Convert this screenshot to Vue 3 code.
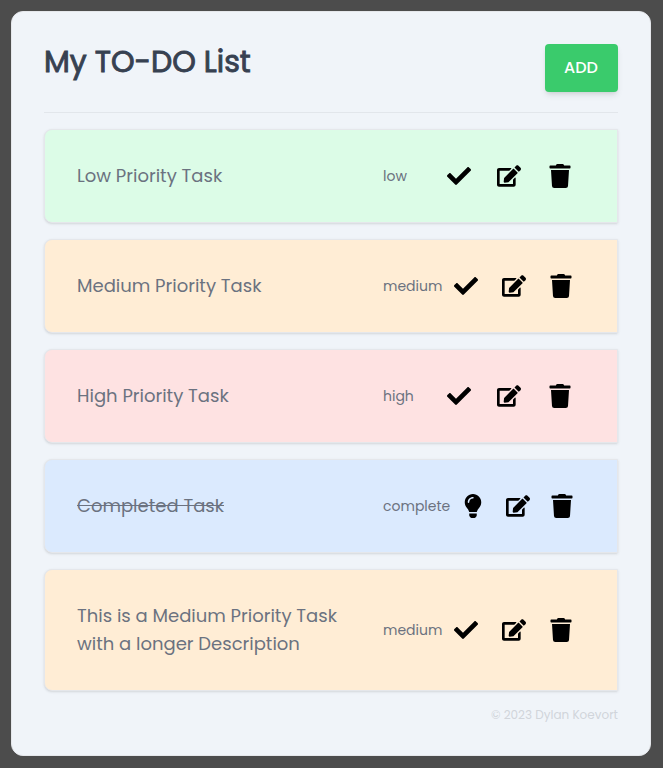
<script setup>
const CHECK = {
  box: '0 0 512 512',
  d: 'M173.898 439.404l-166.4-166.4c-9.997-9.997-9.997-26.206 0-36.204l36.203-36.204c9.997-9.998 26.207-9.998 36.204 0L192 312.69 432.095 72.596c9.997-9.997 26.207-9.997 36.204 0l36.203 36.204c9.997 9.997 9.997 26.206 0 36.204l-294.4 294.401c-9.998 9.997-26.207 9.997-36.204-.001z',
}
const BULB = {
  box: '0 0 352 512',
  d: 'M96.06 454.35c.01 6.29 1.87 12.45 5.36 17.69l17.09 25.69a31.99 31.99 0 0 0 26.64 14.28h61.71a31.99 31.99 0 0 0 26.64-14.28l17.09-25.69a31.989 31.989 0 0 0 5.36-17.69l.04-38.35H96.01l.05 38.35zM0 176c0 44.37 16.45 84.85 43.56 115.78 16.52 18.85 42.36 58.23 52.21 91.45.04.26.07.52.11.78h160.24c.04-.26.07-.51.11-.78 9.85-33.22 35.69-72.6 52.21-91.45C335.55 260.85 352 220.37 352 176 352 78.61 272.91-.3 175.45 0 73.44.31 0 82.97 0 176zm176-80c-44.11 0-80 35.89-80 80 0 8.84-7.16 16-16 16s-16-7.16-16-16c0-61.76 50.24-112 112-112 8.84 0 16 7.16 16 16s-7.16 16-16 16z',
}
const EDIT = {
  box: '0 0 576 512',
  d: 'M402.6 83.2l90.2 90.2c3.8 3.8 3.8 10 0 13.8L274.4 405.6l-92.8 10.3c-12.4 1.4-22.9-9.1-21.5-21.5l10.3-92.8L388.8 83.2c3.8-3.8 10-3.8 13.8 0zm162-22.9l-48.8-48.8c-15.2-15.2-39.9-15.2-55.2 0l-35.4 35.4c-3.8 3.8-3.8 10 0 13.8l90.2 90.2c3.8 3.8 10 3.8 13.8 0l35.4-35.4c15.2-15.3 15.2-40 0-55.2zM384 346.2V448H64V128h229.8c3.2 0 6.2-1.3 8.5-3.5l40-40c7.6-7.6 2-20.5-8.5-20.5H48C21.5 64 0 85.5 0 112v352c0 26.5 21.5 48 48 48h352c26.5 0 48-21.5 48-48V306.2c0-10.7-12.9-16-20.5-8.5l-40 40c-2.2 2.3-3.5 5.3-3.5 8.5z',
}
const TRASH = {
  box: '0 0 448 512',
  d: 'M432 32H312l-9.4-18.7A24 24 0 0 0 281.1 0H166.8a23.72 23.72 0 0 0-21.4 13.3L136 32H16A16 16 0 0 0 0 48v32a16 16 0 0 0 16 16h416a16 16 0 0 0 16-16V48a16 16 0 0 0-16-16zM53.2 467a48 48 0 0 0 47.9 45h245.8a48 48 0 0 0 47.9-45L416 128H32z',
}

const tasks = [
  { title: 'Low Priority Task', status: 'low' },
  { title: 'Medium Priority Task', status: 'medium' },
  { title: 'High Priority Task', status: 'high' },
  { title: 'Completed Task', status: 'complete' },
  { title: 'This is a Medium Priority Task with a longer Description', status: 'medium' },
]
const iconsFor = (task) => [task.status === 'complete' ? BULB : CHECK, EDIT, TRASH]
</script>

<template>
  <main class="card">
    <header class="header">
      <h1 class="heading">My TO-DO List</h1>
      <button class="add" type="button">ADD</button>
    </header>
    <ul class="tasks">
      <li v-for="task in tasks" :key="task.title" class="task" :class="task.status">
        <p class="title"><span>{{ task.title }}</span></p>
        <div class="controls">
          <span class="status"><span>{{ task.status }}</span></span>
          <span v-for="(icon, i) in iconsFor(task)" :key="i" class="action">
            <svg class="icon" :viewBox="icon.box"><path :d="icon.d" /></svg>
          </span>
        </div>
      </li>
    </ul>
    <footer class="footer"><span>© 2023 Dylan Koevort</span></footer>
  </main>
</template>

<style>
body {
  background: #4c4c4c;
}
</style>

<style scoped>
.card {
  box-sizing: border-box;
  width: 640px;
  height: 745px;
  margin: 11px;
  padding: 32px;
  border: 1px solid #e5e7eb;
  border-radius: 12px;
  background: #f0f4f9;
  font-family: Poppins, Inter, "Open Sans", sans-serif;
  color: #6b7280;
}
.header {
  display: flex;
  justify-content: space-between;
  align-items: flex-start;
  height: 68px;
  border-bottom: 1px solid #e2e6eb;
}
.heading {
  margin: 0;
  font-size: 30px;
  line-height: 36px;
  font-weight: 400;
  -webkit-text-stroke: 0.9px #374151;
  color: #374151;
}
.add {
  width: 73px;
  height: 48px;
  padding: 0 1px 1px 0;
  border: 0;
  border-radius: 4px;
  background: #3acb6c;
  box-shadow: 0 4px 6px -1px rgba(0, 0, 0, 0.1), 0 2px 4px -2px rgba(0, 0, 0, 0.1);
  color: #fff;
  font: inherit;
  font-size: 16px;
  font-weight: 500;
}
.tasks {
  display: flex;
  flex-direction: column;
  gap: 16px;
  margin: 16px 0 0;
  padding: 0;
  list-style: none;
}
.task {
  box-sizing: border-box;
  display: grid;
  grid-template-columns: 306px 201.8px;
  align-items: center;
  min-height: 94px;
  padding: 32px;
  border: 1px solid #e5e7eb;
  border-radius: 8px 0 0 8px;
  box-shadow: 0 1px 3px rgba(0, 0, 0, 0.1), 0 1px 2px -1px rgba(0, 0, 0, 0.1);
}
.low { background: #dcfce7; }
.medium { background: #ffedd5; }
.high { background: #fee2e2; }
.complete { background: #dbeafe; }
.title {
  margin: 0;
  padding-right: 34px;
  font-size: 18px;
  line-height: 28px;
}
.complete .title {
  text-decoration: line-through;
}
.controls {
  display: grid;
  grid-template-columns: repeat(4, 1fr);
  align-items: center;
}
.status {
  font-size: 14px;
  line-height: 20px;
}
.action {
  display: flex;
  justify-content: center;
  min-width: 0;
}
.icon {
  width: 24px;
  height: 24px;
  fill: #000;
}
.footer {
  margin-top: 16px;
  font-size: 12px;
  line-height: 16px;
  text-align: right;
  color: #d1d5db;
}
</style>
